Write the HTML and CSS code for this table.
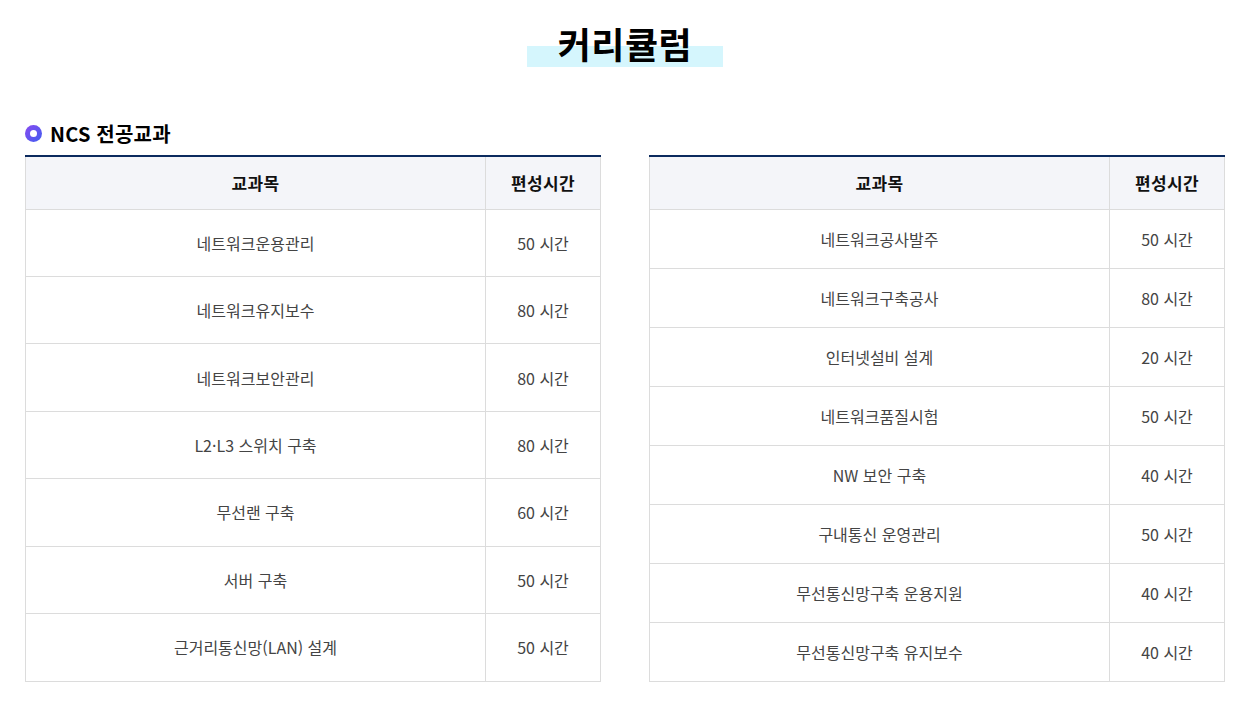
FILE: index.html
```html
<!DOCTYPE html>
<html lang="ko">
<head>
<meta charset="utf-8">
<link rel="stylesheet" href="styles.css">
</head>
<body>
<div class="page">
  <div class="title-wrap">
    <h1 class="title"><span class="title-hl"></span><span class="title-text">커리큘럼</span></h1>
  </div>
  <h2 class="section"><span class="ring"></span>NCS 전공교과</h2>
  <div class="tables">
    <table class="curr left">
      <colgroup><col class="c1"><col class="c2"></colgroup>
      <thead><tr><th>교과목</th><th>편성시간</th></tr></thead>
      <tbody>
        <tr><td>네트워크운용관리</td><td>50 시간</td></tr>
        <tr><td>네트워크유지보수</td><td>80 시간</td></tr>
        <tr><td>네트워크보안관리</td><td>80 시간</td></tr>
        <tr><td>L2·L3 스위치 구축</td><td>80 시간</td></tr>
        <tr><td>무선랜 구축</td><td>60 시간</td></tr>
        <tr><td>서버 구축</td><td>50 시간</td></tr>
        <tr><td>근거리통신망(LAN) 설계</td><td>50 시간</td></tr>
      </tbody>
    </table>
    <table class="curr right">
      <colgroup><col class="c1"><col class="c2"></colgroup>
      <thead><tr><th>교과목</th><th>편성시간</th></tr></thead>
      <tbody>
        <tr><td>네트워크공사발주</td><td>50 시간</td></tr>
        <tr><td>네트워크구축공사</td><td>80 시간</td></tr>
        <tr><td>인터넷설비 설계</td><td>20 시간</td></tr>
        <tr><td>네트워크품질시험</td><td>50 시간</td></tr>
        <tr><td>NW 보안 구축</td><td>40 시간</td></tr>
        <tr><td>구내통신 운영관리</td><td>50 시간</td></tr>
        <tr><td>무선통신망구축 운용지원</td><td>40 시간</td></tr>
        <tr><td>무선통신망구축 유지보수</td><td>40 시간</td></tr>
      </tbody>
    </table>
  </div>
</div>
</body>
</html>
```

FILE: styles.css
```css
* { box-sizing: border-box; }
html, body { margin: 0; padding: 0; background: #fff; }
body {
  font-family: "Noto Sans CJK KR", "Noto Sans", sans-serif;
  color: #111;
}
.page {
  padding: 0 20px 0 25px;
}
.title-wrap {
  display: flex;
  justify-content: center;
  padding-top: 18px;
}
.title {
  position: relative;
  margin: 0;
  width: 196px;
  height: 50px;
  font-size: 36px;
  font-weight: 700;
  line-height: 50px;
  text-align: center;
  letter-spacing: 0.5px;
  color: #000;
}
.title-hl {
  position: absolute;
  left: 0;
  right: 0;
  top: 28px;
  height: 21px;
  background: #d5f6fd;
}
.title-text { position: relative; }
.section {
  display: flex;
  align-items: center;
  gap: 8px;
  margin: 52px 0 0 0;
  height: 26px;
  font-size: 20px;
  font-weight: 700;
  letter-spacing: 0.2px;
  color: #000;
}
.ring {
  flex: none;
  width: 17px;
  height: 17px;
  border-radius: 50%;
  background: linear-gradient(135deg, #8a4bf0, #3f5df0);
  display: flex;
  align-items: center;
  justify-content: center;
}
.ring::after {
  content: "";
  width: 7px;
  height: 7px;
  border-radius: 50%;
  background: #fff;
}
.tables {
  display: flex;
  gap: 48px;
  margin-top: 9px;
}
.curr {
  width: 575px;
  border-collapse: collapse;
  border-top: 2px solid #0b2a5e;
  table-layout: fixed;
}
.curr col.c1 { width: 460px; }
.curr col.c2 { width: 115px; }
.curr th, .curr td {
  border: 1px solid #dcdcdc;
  text-align: center;
  padding: 0;
}
.curr th {
  height: 53px;
  background: #f4f5f9;
  font-size: 17px;
  font-weight: 700;
  letter-spacing: 0.3px;
  color: #111;
}
.curr thead th { border-top: none; }
.curr td {
  font-size: 16px;
  color: #444;
  font-weight: 400;
}
.left td { height: 67.4px; }
.right td { height: 59px; }
```
